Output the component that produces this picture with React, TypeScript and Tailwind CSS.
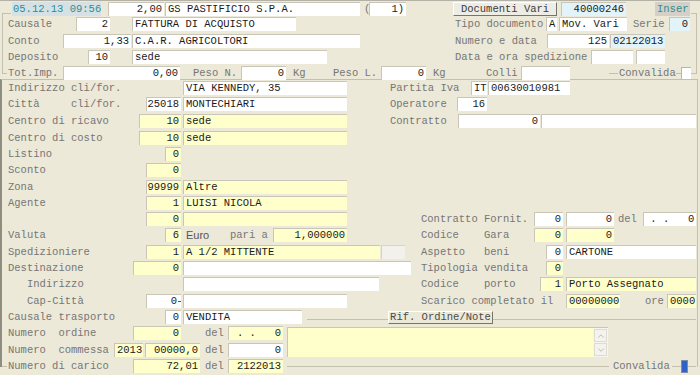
import { ChevronUp, ChevronDown } from "lucide-react";

type FieldProps = { c?: string; v?: string; t?: "w" | "y" | "b"; r?: boolean };

// input-like cell of the legacy form
function F({ c = "", v = "", t = "w", r = false }: FieldProps) {
  const bg = t === "y" ? "bg-[#FFFFCC]" : t === "b" ? "bg-[#E2F4FA]" : "bg-white";
  return (
    <div
      className={`${c} ${bg} ${r ? "pr-[2px] text-right" : "pl-[2px]"} h-[14px] shrink-0 overflow-hidden whitespace-pre border-l border-t border-[#C9C6B7] leading-[13px] text-[#1a1a1a]`}
    >
      {v}
    </div>
  );
}

function L({ c = "", v }: { c?: string; v: string }) {
  return <div className={`${c} shrink-0 whitespace-pre leading-[14px] text-[#767676]`}>{v}</div>;
}

function Line({ c = "" }: { c?: string }) {
  return <div className={`${c} h-px shrink-0 bg-[#C3C0B0]`} />;
}

export default function App() {
  return (
    <div className="h-[375px] w-[700px] overflow-hidden bg-[#ECE9D8] font-['Liberation_Mono','Courier_New',monospace] text-[10.5px]">
      <div className="h-px w-full bg-[#B4B2A6]" />

      {/* Header */}
      <div className="relative z-10 ml-[11px] flex h-[15px] w-[680px] items-end bg-[#ECE9D8]">
        <div className="ml-[1px] h-[14px] w-[89px] shrink-0 whitespace-pre bg-[#D5E1E5] pl-[1px] leading-[14px] text-[#2F8E8E]">
          05.12.13 09:56
        </div>
        <F c="ml-[7px] w-[56px]" v="2,00" r />
        <F c="ml-[1px] w-[195px]" v="GS PASTIFICIO S.P.A." />
        <L c="ml-[4px] w-[5px]" v="(" />
        <F c="w-[37px]" v="1)" r />
        <button
          type="button"
          className="ml-[47px] h-[14px] w-[104px] shrink-0 border-b border-l border-r border-t border-b-[#77756A] border-l-white border-r-[#77756A] border-t-white bg-[#EEEDE5] leading-[12px] text-[#3A3A3A]"
        >
          Documenti Vari
        </button>
        <F c="ml-[4px] w-[65px]" v="40000246" t="b" r />
        <div className="ml-[29px] h-[14px] w-[35px] shrink-0 bg-[#D4D0C8] pl-[2px] leading-[14px] text-[#2F8E8E]">Inser</div>
      </div>

      {/* Testata documento */}
      <div className="ml-[2px] mt-[-3px] h-[61px] w-[695px] border-l border-r border-t border-[#C3C0B0]">
        <div className="mt-[2px] flex h-[16px] items-center">
          <L c="ml-[5px] w-[68px]" v="Causale" />
          <F c="w-[34px]" v="2" r />
          <F c="ml-[22px] w-[164px]" v="FATTURA DI ACQUISTO" />
          <L c="ml-[159px] w-[91px]" v="Tipo documento" />
          <F c="w-[11px]" v="A" />
          <F c="ml-[2px] w-[68px]" v="Mov. Vari" />
          <L c="ml-[6px] w-[36px]" v="Serie" />
          <F c="w-[21px]" v="0" t="b" r />
        </div>
        <div className="flex h-[17px] items-center">
          <L c="ml-[5px] w-[55px]" v="Conto" />
          <F c="w-[68px]" v="1,33" r />
          <F c="ml-[1px] w-[228px]" v="C.A.R. AGRICOLTORI" />
          <L c="ml-[95px] w-[92px]" v="Numero e data" />
          <F c="w-[62px]" v="125" r />
          <F c="ml-[1px] w-[55px]" v="02122013" t="b" />
        </div>
        <div className="flex h-[16px] items-center">
          <L c="ml-[5px] w-[80px]" v="Deposito" />
          <F c="w-[22px]" v="10" r />
          <F c="ml-[22px] w-[195px]" v="sede" />
          <L c="ml-[128px] w-[136px]" v="Data e ora spedizione" />
          <F c="w-[42px]" />
          <F c="ml-[3px] w-[29px]" />
        </div>
      </div>

      {/* Totali */}
      <div className="relative mt-[-9px] flex h-[16px] items-center">
        <Line c="ml-[3px] w-[4px]" />
        <L c="ml-[1px] w-[55px]" v="Tot.Imp." />
        <F c="w-[117px]" v="0,00" r />
        <L c="ml-[13px] w-[48px]" v="Peso N." />
        <F c="w-[45px]" v="0" r />
        <L c="ml-[7px] w-[40px]" v="Kg" />
        <L c="w-[48px]" v="Peso L." />
        <F c="w-[45px]" v="0" r />
        <L c="ml-[7px] w-[53px]" v="Kg" />
        <L c="w-[35px]" v="Colli" />
        <F c="w-[49px]" />
        <Line c="ml-[39px] w-[9px]" />
        <L c="ml-[1px] w-[57px]" v="Convalida" />
        <Line c="w-[5px]" />
        <div className="h-[12px] w-[10px] shrink-0 border-l border-t border-[#B9B6A7] bg-white" />
        <Line c="w-[6px]" />
      </div>

      {/* Anagrafica e condizioni */}
      <div className="mt-[-2px] h-[288px] w-[698px] border-r border-t border-[#C3C0B0] border-l-2 border-l-[#8F8D80]">
        <div className="flex h-[16px] items-center">
          <L c="ml-[6px] w-[175px]" v="Indirizzo cli/for." />
          <F c="w-[164px]" v="VIA KENNEDY, 35" />
          <L c="ml-[43px] w-[81px]" v="Partita Iva" />
          <F c="w-[16px]" v="IT" />
          <F c="ml-[1px] w-[82px]" v="00630010981" />
        </div>
        <div className="flex h-[16px] items-center">
          <L c="ml-[6px] w-[138px]" v="Città     cli/for." />
          <F c="w-[35px]" v="25018" r />
          <F c="ml-[2px] w-[164px]" v="MONTECHIARI" />
          <L c="ml-[43px] w-[67px]" v="Operatore" />
          <F c="w-[30px]" v="16" r />
        </div>
        <div className="flex h-[17px] items-center">
          <L c="ml-[6px] w-[131px]" v="Centro di ricavo" />
          <F c="w-[42px]" v="10" t="y" r />
          <F c="ml-[2px] w-[164px]" v="sede" t="y" />
          <L c="ml-[43px] w-[68px]" v="Contratto" />
          <F c="w-[82px]" v="0" r />
          <F c="ml-[1px] w-[155px]" />
        </div>
        <div className="flex h-[17px] items-center">
          <L c="ml-[6px] w-[131px]" v="Centro di costo" />
          <F c="w-[42px]" v="10" t="y" r />
          <F c="ml-[2px] w-[164px]" v="sede" t="y" />
        </div>
        <div className="flex h-[16px] items-center">
          <L c="ml-[6px] w-[157px]" v="Listino" />
          <F c="w-[16px]" v="0" t="y" r />
        </div>
        <div className="flex h-[16px] items-center">
          <L c="ml-[6px] w-[138px]" v="Sconto" />
          <F c="w-[35px]" v="0" t="y" r />
        </div>
        <div className="flex h-[17px] items-center">
          <L c="ml-[6px] w-[138px]" v="Zona" />
          <F c="w-[35px]" v="99999" t="y" r />
          <F c="ml-[2px] w-[164px]" v="Altre" t="y" />
        </div>
        <div className="flex h-[16px] items-center">
          <L c="ml-[6px] w-[138px]" v="Agente" />
          <F c="w-[35px]" v="1" t="y" r />
          <F c="ml-[2px] w-[164px]" v="LUISI NICOLA" t="y" />
        </div>
        <div className="flex h-[16px] items-center">
          <L c="ml-[6px] w-[138px]" v="" />
          <F c="w-[35px]" v="0" t="y" r />
          <F c="ml-[2px] w-[164px]" t="y" />
          <L c="ml-[74px] w-[113px]" v="Contratto Fornit." />
          <F c="w-[29px]" v="0" r />
          <F c="ml-[3px] w-[48px]" v="0" r />
          <L c="ml-[4px] w-[25px]" v="del" />
          <F c="w-[53px]" v=" . .   0" r />
        </div>
        <div className="flex h-[16px] items-center">
          <L c="ml-[6px] w-[157px]" v="Valuta" />
          <F c="w-[16px]" v="6" t="y" r />
          <div className="ml-[5px] w-[44px] shrink-0 font-['Liberation_Sans',Arial,sans-serif] text-[11px] leading-[14px] text-[#555]">
            Euro
          </div>
          <L c="w-[43px]" v="pari a" />
          <F c="w-[74px]" v="1,000000" t="y" r />
          <L c="ml-[74px] w-[113px]" v="Codice    Gara" />
          <F c="w-[29px]" v="0" t="y" r />
          <F c="ml-[3px] w-[48px]" v="0" t="y" r />
        </div>
        <div className="flex h-[17px] items-center">
          <L c="ml-[6px] w-[138px]" v="Spedizioniere" />
          <F c="w-[35px]" v="1" t="y" r />
          <F c="ml-[2px] w-[197px]" v="A 1/2 MITTENTE" t="y" />
          <div className="ml-[1px] h-[14px] w-[24px] shrink-0 border-l border-t border-[#D6D4C8] bg-[#F2F1EC]" />
          <L c="ml-[16px] w-[125px]" v="Aspetto   beni" />
          <F c="w-[17px]" v="0" r />
          <F c="ml-[3px] w-[130px]" v="CARTONE" />
        </div>
        <div className="flex h-[16px] items-center">
          <L c="ml-[6px] w-[125px]" v="Destinazione" />
          <F c="w-[48px]" v="0" t="y" r />
          <F c="ml-[2px] w-[228px]" />
          <L c="ml-[10px] w-[125px]" v="Tipologia vendita" />
          <F c="w-[17px]" v="0" t="y" r />
        </div>
        <div className="flex h-[16px] items-center">
          <L c="ml-[25px] w-[156px]" v="Indirizzo" />
          <F c="w-[196px]" />
          <L c="ml-[42px] w-[119px]" v="Codice    porto" />
          <F c="w-[23px]" v="1" t="y" r />
          <F c="ml-[3px] w-[130px]" v="Porto Assegnato" t="y" />
        </div>
        <div className="flex h-[17px] items-center">
          <L c="ml-[25px] w-[119px]" v="Cap-Città" />
          <div className="flex h-[14px] w-[35px] shrink-0 items-center justify-end border-l border-t border-[#C9C6B7] bg-white leading-[13px] text-[#1a1a1a]">
            0<span className="ml-[1px] h-px w-[3px] bg-[#555]" />
          </div>
          <F c="ml-[2px] w-[164px]" />
          <L c="ml-[74px] w-[145px]" v="Scarico completato il" />
          <F c="w-[54px]" v="00000000" t="y" />
          <L c="ml-[25px] w-[22px]" v="ore" />
          <F c="w-[29px]" v="0000" t="y" />
        </div>
        <div className="flex h-[16px] items-center">
          <L c="ml-[6px] w-[157px]" v="Causale trasporto" />
          <F c="w-[16px]" v="0" r />
          <F c="ml-[2px] w-[119px]" v="VENDITA" />
          <Line c="relative top-[2px] ml-[5px] w-[81px]" />
          <button
            type="button"
            className="h-[13px] w-[105px] shrink-0 border-b border-l border-r border-t border-b-[#77756A] border-l-white border-r-[#77756A] border-t-white bg-[#ECE9D8] leading-[11px] text-[#4a4a4a]"
          >
            Rif. Ordine/Note
          </button>
          <Line c="relative top-[2px] w-[203px]" />
        </div>

        {/* Ordine, commessa + note */}
        <div className="flex h-[33px]">
          <div className="w-[285px] shrink-0">
            <div className="flex h-[16px] items-center">
              <L c="ml-[6px] w-[125px]" v="Numero  ordine" />
              <F c="w-[48px]" v="0" t="y" r />
              <L c="ml-[24px] w-[23px]" v="del" />
              <F c="w-[55px]" v=" . .   0" t="y" r />
            </div>
            <div className="flex h-[17px] items-center">
              <L c="ml-[6px] w-[106px]" v="Numero  commessa" />
              <F c="w-[29px]" v="2013" t="y" />
              <F c="ml-[2px] w-[55px]" v="00000,0" t="y" r />
              <L c="ml-[5px] w-[23px]" v="del" />
              <F c="w-[55px]" v="0" r />
            </div>
          </div>
          <div className="mt-[2px] flex h-[30px] w-[321px] shrink-0 border-l border-t border-[#C9C6B7] bg-[#FFFFCC]">
            <div className="flex-1" />
            <div className="flex w-[15px] flex-col gap-[1px] bg-[#F6F5F0] p-[1px]">
              <div className="flex h-[13px] items-center justify-center border border-[#DEDCD2] bg-[#F4F3EE] text-[#B3B1A6]">
                <ChevronUp size={10} strokeWidth={2} />
              </div>
              <div className="flex h-[13px] items-center justify-center border border-[#DEDCD2] bg-[#F4F3EE] text-[#B3B1A6]">
                <ChevronDown size={10} strokeWidth={2} />
              </div>
            </div>
          </div>
        </div>

        <div className="flex h-[16px] items-center">
          <Line c="w-[5px]" />
          <L c="ml-[1px] w-[125px]" v="Numero di carico" />
          <F c="w-[67px]" v="72,01" t="y" r />
          <L c="ml-[5px] w-[23px]" v="del" />
          <F c="w-[55px]" v="2122013" t="y" r />
          <Line c="ml-[4px] w-[322px]" />
          <L c="ml-[4px] w-[57px]" v="Convalida" />
          <Line c="ml-[2px] w-[9px]" />
          <div className="h-[13px] w-[7px] shrink-0 border border-[#7D8DB0] bg-[#2F62C6]" />
          <Line c="w-[8px]" />
        </div>
      </div>
    </div>
  );
}
